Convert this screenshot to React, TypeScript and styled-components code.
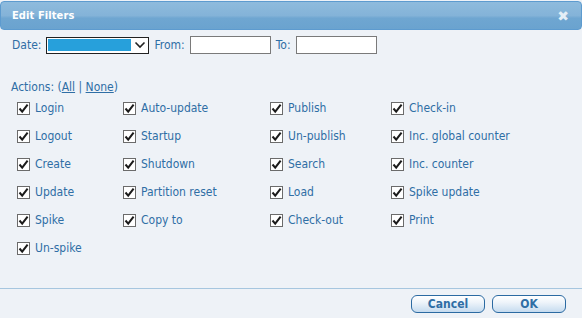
import styled, { createGlobalStyle } from "styled-components";

const GlobalStyle = createGlobalStyle`
  html, body {
    margin: 0;
    padding: 0;
    background: #eef2f7;
  }
  body {
    font-family: "DejaVu Sans Condensed", "DejaVu Sans", sans-serif;
    font-size: 12px;
    color: #2f6ea5;
  }
`;

const Dialog = styled.div`
  width: 582px;
  height: 318px;
  box-sizing: border-box;
  padding-top: 1px;
  display: flex;
  flex-direction: column;
  background: #eef2f7;
`;

const TitleBar = styled.div`
  height: 29px;
  box-sizing: border-box;
  display: flex;
  align-items: center;
  justify-content: space-between;
  padding: 0 12px 0 11px;
  border: 1px solid #5d9bcf;
  border-radius: 4px;
  background: linear-gradient(to bottom, #8ebbdd 0%, #84b3d8 50%, #6fa6d1 60%, #6aa3cf 100%);
`;

const Title = styled.span`
  color: #ffffff;
  font-weight: bold;
  font-size: 11px;
  letter-spacing: 0.1px;
`;

const Close = styled.span`
  color: #e4eef7;
  font-weight: bold;
  font-size: 14px;
  line-height: 1;
  font-family: "DejaVu Sans", sans-serif;
`;

const DateRow = styled.div`
  display: flex;
  align-items: center;
  gap: 5px;
  padding: 5px 0 0 12px;
  height: 20px;
`;

const Label = styled.span`
  color: #2f6ea5;
`;

const Select = styled.div`
  width: 103px;
  height: 17px;
  box-sizing: border-box;
  border: 1px solid #222;
  background: #fff;
  display: flex;
  align-items: center;
  padding: 1px;
  gap: 3px;
`;

const SelectValue = styled.div`
  width: 83px;
  height: 12px;
  background: #27a0db;
`;

const TextBox = styled.div`
  width: 81px;
  height: 18px;
  box-sizing: border-box;
  border: 1px solid #7a7a7a;
  background: #fff;
`;

const ActionsHead = styled.div`
  padding: 25px 0 0 11px;
  color: #2f6ea5;
`;

const Link = styled.span`
  text-decoration: underline;
`;

const Grid = styled.div`
  display: grid;
  grid-template-columns: 106px 147px 121px 1fr;
  grid-auto-rows: 28px;
  padding: 0 0 0 17px;
`;

const Item = styled.div`
  display: flex;
  align-items: center;
  gap: 5px;
  height: 28px;
`;

const Box = styled.span`
  width: 13px;
  height: 13px;
  box-sizing: border-box;
  border: 1px solid #6b6b6b;
  background: #fff;
  display: flex;
  align-items: center;
  justify-content: center;
`;

const Spacer = styled.div`
  flex: 1;
`;

const Footer = styled.div`
  border-top: 1px solid #a6c6df;
  height: 30px;
  display: flex;
  justify-content: flex-end;
  align-items: flex-start;
  gap: 7px;
  padding: 6px 16px 0 0;
  box-sizing: border-box;
`;

const Button = styled.button`
  width: 74px;
  height: 18px;
  padding: 0;
  border: 1px solid #2b6aa2;
  border-radius: 6px;
  background: linear-gradient(to bottom, #ffffff 0%, #eef4fa 40%, #c5dbef 100%);
  color: #2f6ea5;
  font-family: "DejaVu Sans Condensed", "DejaVu Sans", sans-serif;
  font-size: 12px;
  font-weight: bold;
  line-height: 16px;
`;

const Check = () => (
  <svg width="11" height="11" viewBox="0 0 11 11">
    <path d="M1.5 5.5 L4.2 8.6 L9.6 1.6" fill="none" stroke="#1b1b1b" strokeWidth="2" />
  </svg>
);

const Chevron = () => (
  <svg width="12" height="8" viewBox="0 0 12 8">
    <path d="M1.5 1.5 L6 6 L10.5 1.5" fill="none" stroke="#222" strokeWidth="1.6" />
  </svg>
);

const actions = [
  "Login", "Auto-update", "Publish", "Check-in",
  "Logout", "Startup", "Un-publish", "Inc. global counter",
  "Create", "Shutdown", "Search", "Inc. counter",
  "Update", "Partition reset", "Load", "Spike update",
  "Spike", "Copy to", "Check-out", "Print",
  "Un-spike",
];

export default function App() {
  return (
    <>
      <GlobalStyle />
      <Dialog>
        <TitleBar>
          <Title>Edit Filters</Title>
          <Close>✖</Close>
        </TitleBar>
        <DateRow>
          <Label>Date:</Label>
          <Select>
            <SelectValue />
            <Chevron />
          </Select>
          <Label>From:</Label>
          <TextBox />
          <Label>To:</Label>
          <TextBox />
        </DateRow>
        <ActionsHead>
          Actions: (<Link>All</Link> | <Link>None</Link>)
        </ActionsHead>
        <Grid>
          {actions.map((a) => (
            <Item key={a}>
              <Box>
                <Check />
              </Box>
              <Label>{a}</Label>
            </Item>
          ))}
        </Grid>
        <Spacer />
        <Footer>
          <Button>Cancel</Button>
          <Button>OK</Button>
        </Footer>
      </Dialog>
    </>
  );
}
